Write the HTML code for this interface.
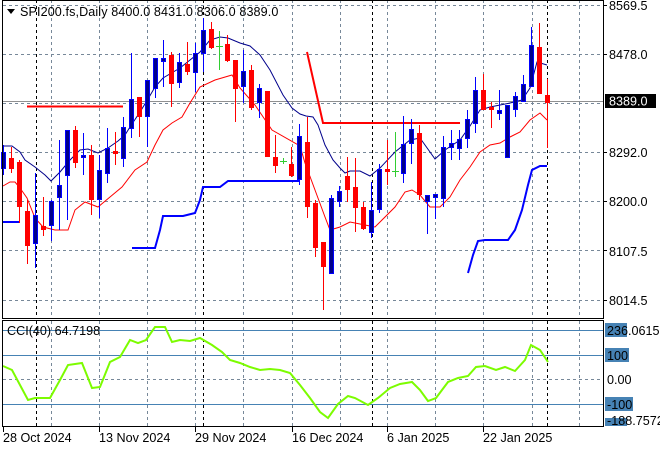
<!DOCTYPE html>
<html><head><meta charset="utf-8"><style>
html,body{margin:0;padding:0;background:#fff;}
svg{display:block;font-family:"Liberation Sans",sans-serif;}
</style></head><body>
<svg width="660" height="450" viewBox="0 0 660 450" xmlns="http://www.w3.org/2000/svg">
<rect width="660" height="450" fill="#fff"/>
<g stroke="#778899" stroke-width="1" stroke-dasharray="3,3" fill="none">
<path d="M3 5.5H603M3 54.5H603M3 103.5H603M3 152.5H603M3 201.5H603M3 250.5H603M3 300.5H603"/>
<path d="M51.5 0V318M99.5 0V318M147.5 0V318M195.5 0V318M243.5 0V318M292.5 0V318M340.5 0V318M387.5 0V318M435.5 0V318M483.5 0V318M532.5 0V318M579.5 0V318"/>
<path d="M51.5 321V426M99.5 321V426M147.5 321V426M195.5 321V426M243.5 321V426M292.5 321V426M340.5 321V426M387.5 321V426M435.5 321V426M483.5 321V426M532.5 321V426M579.5 321V426"/>
<path d="M3 379.5H603"/>
</g>
<g stroke="#000" stroke-width="1" stroke-dasharray="3,3">
<path d="M36.5 0V318M203.5 0V318M372.5 0V318M547.5 0V318M36.5 321V426M203.5 321V426M372.5 321V426M547.5 321V426"/>
</g>
<path d="M3 101.5H603" stroke="#909090" stroke-width="1"/>
<path d="M3 330.5H603M3 355.5H603M3 404.5H603" stroke="#4682b4" stroke-width="1"/>
<polyline fill="none" stroke="#00008b" stroke-width="1" points="3,146 12,146 20,152 25,160 35,167 45,175 51,181 60,172 70,160 80,150 88,149 98,153 108,148 118,141 125,135 130,127 140,112 148,99 155,87 163,78 180,68 200,52 210,40 220,37 228,38 240,43 250,46 260,55 270,70 283,95 292,108 300,114 306,116 313,117 318,125 325,145 333,160 340,168 345,173 350,171 360,171 370,176 380,168 395,152 410,140 420,138 435,159 445,150 460,140 470,126 480,110 490,107 510,103 522,100 530,88 537,62 547,65"/>
<polyline fill="none" stroke="#ff0000" stroke-width="1" points="3,186 10,182 15,182 20,188 27,198 35,218 43,227 55,230 68,230 75,210 85,202 98,207 110,197 122,187 135,170 147,162 155,145 163,130 172,123 182,117 190,103 200,87 215,80 232,75 240,88 255,105 272,130 300,146 305,163 315,190 325,217 330,230 340,227 350,222 365,225 375,227 380,222 395,207 405,192 412,190 420,195 430,207 440,207 450,197 460,180 470,167 480,152 490,145 500,143 510,137 520,132 530,120 540,113 547,120"/>
<path d="M27 106.5H123" stroke="#ff0000" stroke-width="2"/>
<polyline fill="none" stroke="#ff0000" stroke-width="2" points="307,52 323,123 460,123"/>
<g fill="none" stroke="#0000ff" stroke-width="2">
<polyline points="3,222 19,222"/>
<polyline points="132,248 155,248 160,230 163,216 183,216 195,213 200,200 203,187 220,187 228,181 300,181"/>
<polyline points="468,273 473,255 478,241 485,240 508,240 515,230 522,210 528,185 532,170 540,166 547,166"/>
</g>
<path fill="none" stroke="#0000ff" stroke-width="1" d="M3.5 145V175M35.5 173V268M51.5 200V241M59.5 140V230M67.5 130V220M83.5 133V175M99.5 155V218M107.5 128V183M123.5 117V167M131.5 53V138M147.5 80V147M155.5 58V98M163.5 40V87M179.5 53V88M195.5 43V92M203.5 18V72M243.5 50V103M259.5 84V118M299.5 124V185M331.5 195V273M339.5 186V207M371.5 182V238M379.5 164V213M403.5 116V183M411.5 119V164M427.5 195V234M435.5 194V219M443.5 136V207M451.5 130V160M459.5 130V160M467.5 110V148M475.5 77V133M499.5 90V120M507.5 105V157M515.5 92V117M523.5 75V102M531.5 27V86"/>
<path fill="none" stroke="#ff0000" stroke-width="1" d="M11.5 147V173M19.5 160V223M27.5 200V264M43.5 197V236M75.5 126V168M91.5 145V215M115.5 132V165M139.5 97V137M171.5 52V107M187.5 42V75M211.5 22V49M227.5 35V62M235.5 60V122M251.5 65V110M267.5 91V156M275.5 135V173M291.5 147V177M307.5 117V218M315.5 200V257M323.5 242V310M347.5 157V202M355.5 158V232M363.5 202V230M387.5 140V185M419.5 125V200M483.5 74V110M491.5 102V128M539.5 23V93M547.5 79V148"/>
<path fill="none" stroke="#32cd32" stroke-width="1" d="M219.5 31V70M216 46.5H223M283.5 158V164M280 161.5H287M395.5 132V177M392 171.5H399"/>
<g fill="#00008b" stroke="#0000ff" stroke-width="1">
<rect x="1.5" y="152.5" width="4" height="16"/><rect x="33.5" y="215.5" width="4" height="28"/><rect x="49.5" y="201.5" width="4" height="24"/><rect x="57.5" y="185.5" width="4" height="12"/><rect x="65.5" y="130.5" width="4" height="45"/><rect x="81.5" y="155.5" width="4" height="2"/><rect x="97.5" y="170.5" width="4" height="29"/><rect x="105.5" y="148.5" width="4" height="25"/><rect x="121.5" y="127.5" width="4" height="31"/><rect x="129.5" y="99.5" width="4" height="29"/><rect x="145.5" y="80.5" width="4" height="36"/><rect x="153.5" y="58.5" width="4" height="30"/><rect x="161.5" y="58.5" width="4" height="3"/><rect x="177.5" y="62.5" width="4" height="20"/><rect x="193.5" y="53.5" width="4" height="19"/><rect x="201.5" y="30.5" width="4" height="23"/><rect x="241.5" y="71.5" width="4" height="15"/><rect x="257.5" y="88.5" width="4" height="14"/><rect x="297.5" y="136.5" width="4" height="43"/><rect x="329.5" y="198.5" width="4" height="75"/><rect x="337.5" y="191.5" width="4" height="10"/><rect x="369.5" y="210.5" width="4" height="22"/><rect x="377.5" y="169.5" width="4" height="40"/><rect x="401.5" y="144.5" width="4" height="29"/><rect x="409.5" y="129.5" width="4" height="14"/><rect x="425.5" y="195.5" width="4" height="6"/><rect x="433.5" y="194.5" width="4" height="3"/><rect x="441.5" y="147.5" width="4" height="51"/><rect x="449.5" y="143.5" width="4" height="4"/><rect x="457.5" y="139.5" width="4" height="9"/><rect x="465.5" y="119.5" width="4" height="19"/><rect x="473.5" y="90.5" width="4" height="33"/><rect x="497.5" y="110.5" width="4" height="3"/><rect x="505.5" y="105.5" width="4" height="52"/><rect x="513.5" y="96.5" width="4" height="13"/><rect x="521.5" y="84.5" width="4" height="17"/><rect x="529.5" y="45.5" width="4" height="41"/>
</g>
<g fill="#ff0000" stroke="#ff0000" stroke-width="1">
<rect x="9.5" y="158.5" width="4" height="10"/><rect x="17.5" y="162.5" width="4" height="44"/><rect x="25.5" y="211.5" width="4" height="34"/><rect x="41.5" y="226.5" width="4" height="3"/><rect x="73.5" y="130.5" width="4" height="32"/><rect x="89.5" y="155.5" width="4" height="44"/><rect x="113.5" y="151.5" width="4" height="2"/><rect x="137.5" y="97.5" width="4" height="19"/><rect x="169.5" y="55.5" width="4" height="28"/><rect x="185.5" y="64.5" width="4" height="7"/><rect x="209.5" y="29.5" width="4" height="18"/><rect x="225.5" y="44.5" width="4" height="16"/><rect x="233.5" y="60.5" width="4" height="28"/><rect x="249.5" y="70.5" width="4" height="37"/><rect x="265.5" y="91.5" width="4" height="65"/><rect x="273.5" y="157.5" width="4" height="8"/><rect x="289.5" y="164.5" width="4" height="11"/><rect x="305.5" y="142.5" width="4" height="64"/><rect x="313.5" y="203.5" width="4" height="44"/><rect x="321.5" y="242.5" width="4" height="24"/><rect x="345.5" y="176.5" width="4" height="13"/><rect x="353.5" y="187.5" width="4" height="20"/><rect x="361.5" y="207.5" width="4" height="21"/><rect x="385.5" y="169.5" width="4" height="2"/><rect x="417.5" y="133.5" width="4" height="61"/><rect x="481.5" y="90.5" width="4" height="19"/><rect x="489.5" y="107.5" width="4" height="2"/><rect x="537.5" y="47.5" width="4" height="46"/><rect x="545.5" y="95.5" width="4" height="7"/>
</g>
<polyline fill="none" stroke="#7cfc00" stroke-width="2" points="3,366 12,370 20,385 28,400 35,398 50,398 60,380 68,365 82,363 92,388 100,387 110,362 120,357 130,340 138,343 146,340 155,327 165,327 172,342 180,340 190,341 200,338 212,345 222,352 230,360 240,363 250,367 260,370 270,369 280,370 290,373 300,385 310,398 320,412 328,418 338,404 348,396 355,398 368,405 378,398 390,388 400,384 412,382 420,390 428,401 436,398 448,382 458,378 468,376 476,367 485,366 496,370 505,367 515,371 525,360 531,345 540,350 548,362"/>
<g fill="none" stroke="#000" stroke-width="1">
<path d="M2.5 0V318.5H603.5V0"/>
<rect x="2.5" y="320.5" width="601" height="106"/>
<path d="M2 0.5H603"/>
</g>
<g stroke="#000"><path d="M3.5 427V432M99.5 427V432M195.5 427V432M292.5 427V432M387.5 427V432M483.5 427V432M603.5 5.5H607M603.5 54.5H607M603.5 152.5H607M603.5 201.5H607M603.5 250.5H607M603.5 300.5H607"/></g>
<path d="M7 9H15L11 14Z" fill="#000"/>
<text x="20" y="16" font-size="12.6" fill="#000" letter-spacing="0.1">SPI200.fs,Daily  8400.0 8431.0 8306.0 8389.0</text>
<text x="7" y="335" font-size="12.6" fill="#000">CCI(40) 64.7198</text>
<g font-size="12.6" fill="#000">
<text x="609" y="10">8569.5</text>
<text x="609" y="59">8478.0</text>
<text x="609" y="157">8292.0</text>
<text x="609" y="206">8200.0</text>
<text x="609" y="256">8107.5</text>
<text x="609" y="305">8014.5</text>
</g>
<rect x="605" y="94" width="51" height="14" fill="#000"/>
<text x="609" y="105.5" font-size="12.6" fill="#fff">8389.0</text>
<rect x="605" y="323" width="22" height="14" fill="#4682b4"/>
<rect x="605" y="348" width="24" height="14" fill="#4682b4"/>
<rect x="605" y="397" width="28" height="14" fill="#4682b4"/>
<rect x="605" y="418" width="22" height="8" fill="#4682b4"/>
<g font-size="12.6" fill="#000">
<text x="607" y="335">236.0615</text>
<text x="607" y="360">100</text>
<text x="607" y="384">0.00</text>
<text x="607" y="409">-100</text>
<text x="607" y="425">-188.7572</text>
</g>
<g font-size="12.6" fill="#000">
<text x="3" y="442">28 Oct 2024</text>
<text x="99" y="442">13 Nov 2024</text>
<text x="195" y="442">29 Nov 2024</text>
<text x="292" y="442">16 Dec 2024</text>
<text x="387" y="442">6 Jan 2025</text>
<text x="483" y="442">22 Jan 2025</text>
</g>
</svg>
</body></html>
